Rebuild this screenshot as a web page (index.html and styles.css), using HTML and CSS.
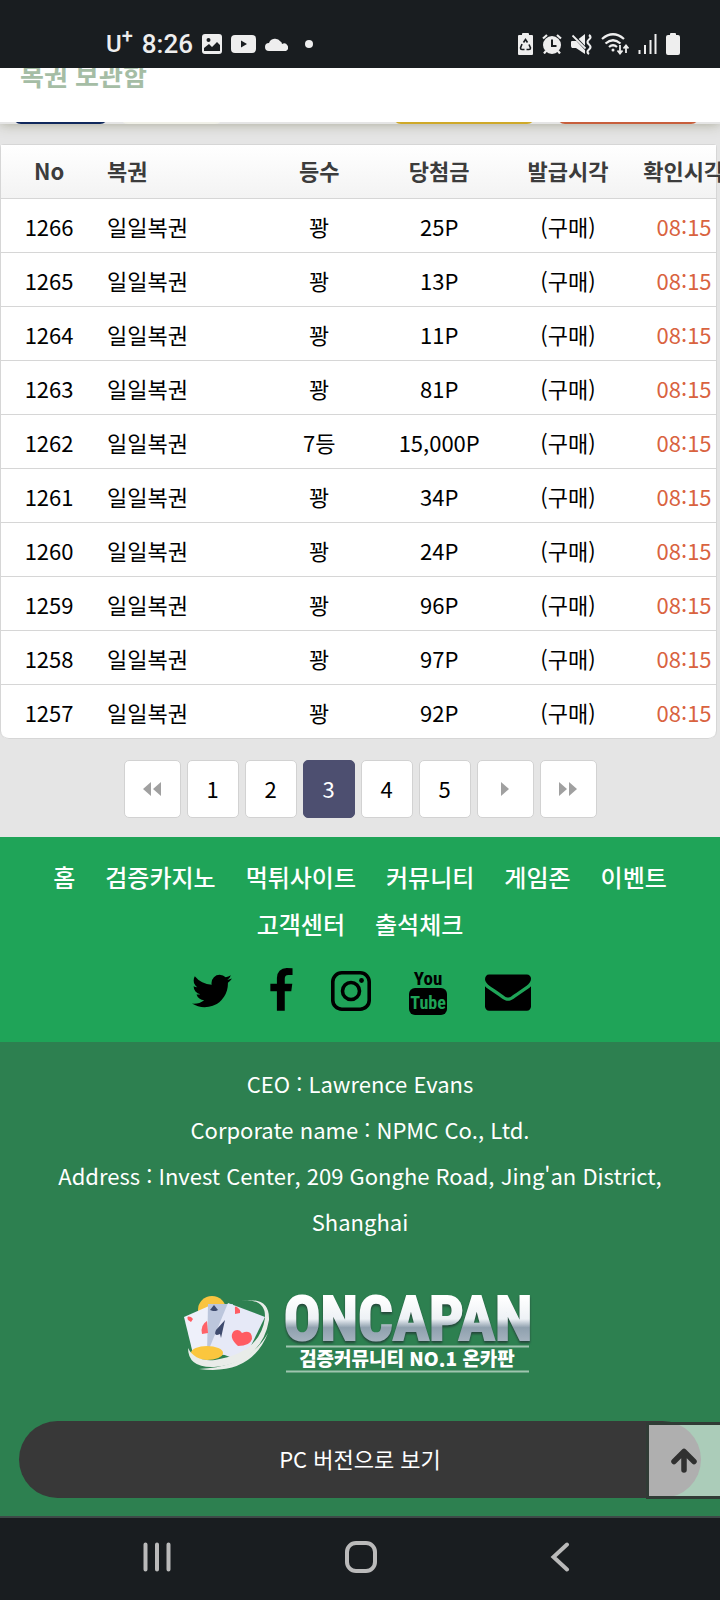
FILE: index.html
```html
<!DOCTYPE html>
<html lang="ko">
<head>
<meta charset="utf-8">
<meta name="viewport" content="width=device-width, initial-scale=1">
<title>복권 보관함</title>
<link rel="stylesheet" href="styles.css">
</head>
<body>
<div class="status">
  <div class="status-side status-left">
    <span class="carrier">U<sup>+</sup></span>
    <span class="clock">8:26</span>
    <svg width="20" height="20" viewBox="0 0 20 20"><rect width="20" height="20" rx="3" fill="#eee"/><circle cx="6.500" cy="6" r="2" fill="#191d20"/><path d="M2 17v-3l5-4 3 3 5-5 3 3v6z" fill="#191d20"/></svg>
    <svg width="25" height="18" viewBox="0 0 25 18"><rect width="25" height="18" rx="4" fill="#eee"/><path d="M10 5.500v7l6-3.500z" fill="#191d20"/></svg>
    <svg width="23" height="13" viewBox="0 0 23 13"><path d="M4 13a4 4 0 0 1 0-8 6.500 6.500 0 0 1 11.500-1.500q1.500.8 1.500 2.500a3.500 3.500 0 0 1 4 7z" fill="#eee"/></svg>
    <i class="dot"></i>
  </div>
  <div class="status-side status-right">
    <svg width="15" height="22" viewBox="0 0 15 22"><path d="M4 2V1q0-1 1-1h5q1 0 1 1v1h3q1 0 1 1v18q0 1-1 1H1q-1 0-1-1V3q0-1 1-1z" fill="#eee"/><path d="M5.500 9.500l2-3 2 3M11 11.500l1.500 3.500q0 1.500-1.500 1.500H8.500M4 11l-1.500 4q0 1.500 1.500 1.500h2.500" fill="none" stroke="#191d20" stroke-width="1.600"/></svg>
    <svg width="20" height="20" viewBox="0 0 20 20"><circle cx="10" cy="11" r="9" fill="#eee"/><path d="M1 4.500L5 1M19 4.500L15 1M4 17l-2 2.500M16 17l2 2.500" stroke="#eee" stroke-width="2.200"/><path d="M10 5.500V12h4.500" fill="none" stroke="#191d20" stroke-width="2"/></svg>
    <svg width="21" height="21" viewBox="0 0 21 21"><path d="M1 7h4l9-7v20l-9-6H1q-1-1-1-2V8q0-1 1-1z" fill="#eee"/><path d="M1 0l14 15" stroke="#191d20" stroke-width="3"/><path d="M1.500 1.500l13 13" stroke="#eee" stroke-width="1.800"/><path d="M18 1q3 2 0 4.500t0 5 0 5 0 4.500" fill="none" stroke="#eee" stroke-width="2.200"/></svg>
    <svg width="28" height="22" viewBox="0 0 28 22"><g fill="none" stroke="#eee" stroke-width="2.200"><path d="M1 6q11-9.500 22 0M4.500 10.500q7.500-6.500 15 0M8 14q4-3.500 8 0"/><path d="M19 12v8M16.500 17.500l2.500 3 2.500-3M25 20v-7M22.500 15.500l2.500-3 2.500 3" stroke-width="1.800"/></g><circle cx="12" cy="17" r="1.500" fill="#eee"/></svg>
    <svg width="19" height="20" viewBox="0 0 19 20"><path d="M1.500 16v4M7 11v9M12.500 6v14M17.500 0v20" stroke="#eee" stroke-width="2"/></svg>
    <svg width="14" height="22" viewBox="0 0 14 22"><path d="M4 2V1q0-1 1-1h4q1 0 1 1v1h2q2 0 2 2v16q0 2-2 2H2q-2 0-2-2V4q0-2 2-2z" fill="#eee"/></svg>
  </div>
</div>
<header class="title-bar"><h1>복권 보관함</h1></header>
<div class="tabs" aria-hidden="true"><span class="tab navy"></span><span class="tab white"></span><span class="tab yellow"></span><span class="tab red"></span></div>
<main>
  <table class="tickets">
    <colgroup><col class="c-no"><col class="c-name"><col class="c-rank"><col class="c-prize"><col class="c-issued"><col class="c-checked"></colgroup>
    <thead><tr><th>No</th><th>복권</th><th>등수</th><th>당첨금</th><th>발급시각</th><th>확인시각</th></tr></thead>
    <tbody>
      <tr><td>1266</td><td>일일복권</td><td>꽝</td><td>25P</td><td>(구매)</td><td>08:15</td></tr>
      <tr><td>1265</td><td>일일복권</td><td>꽝</td><td>13P</td><td>(구매)</td><td>08:15</td></tr>
      <tr><td>1264</td><td>일일복권</td><td>꽝</td><td>11P</td><td>(구매)</td><td>08:15</td></tr>
      <tr><td>1263</td><td>일일복권</td><td>꽝</td><td>81P</td><td>(구매)</td><td>08:15</td></tr>
      <tr><td>1262</td><td>일일복권</td><td>7등</td><td>15,000P</td><td>(구매)</td><td>08:15</td></tr>
      <tr><td>1261</td><td>일일복권</td><td>꽝</td><td>34P</td><td>(구매)</td><td>08:15</td></tr>
      <tr><td>1260</td><td>일일복권</td><td>꽝</td><td>24P</td><td>(구매)</td><td>08:15</td></tr>
      <tr><td>1259</td><td>일일복권</td><td>꽝</td><td>96P</td><td>(구매)</td><td>08:15</td></tr>
      <tr><td>1258</td><td>일일복권</td><td>꽝</td><td>97P</td><td>(구매)</td><td>08:15</td></tr>
      <tr><td>1257</td><td>일일복권</td><td>꽝</td><td>92P</td><td>(구매)</td><td>08:15</td></tr>
    </tbody>
  </table>
  <nav class="pages" aria-label="페이지">
    <a class="arrow" href="#" aria-label="처음"><svg width="18" height="14" viewBox="0 0 18 14"><path d="M8 0v14L0 7zM18 0v14l-8-7z"/></svg></a>
    <a href="#">1</a><a href="#">2</a><a class="current" href="#" aria-current="page">3</a><a href="#">4</a><a href="#">5</a>
    <a class="arrow" href="#" aria-label="다음"><svg width="8" height="14" viewBox="0 0 8 14"><path d="M0 0v14l8-7z"/></svg></a>
    <a class="arrow" href="#" aria-label="마지막"><svg width="18" height="14" viewBox="0 0 18 14"><path d="M0 0v14l8-7zM10 0v14l8-7z"/></svg></a>
  </nav>
</main>
<footer>
  <div class="foot-top">
    <nav class="links"><a href="#">홈</a><a href="#">검증카지노</a><a href="#">먹튀사이트</a><a href="#">커뮤니티</a><a href="#">게임존</a><a href="#">이벤트</a><a href="#">고객센터</a><a href="#">출석체크</a></nav>
    <div class="social">
      <a href="#" aria-label="Twitter"><svg width="40" height="46" viewBox="108 0 1576 1792"><path d="M1684 408q-67 98-162 167 1 14 1 42 0 130-38 259.500t-115.500 248.500-184.500 210.500-258 146-323 54.500q-271 0-496-145 35 4 78 4 225 0 401-138-105-2-188-64.500t-114-159.500q33 5 61 5 43 0 85-11-112-23-185.500-111.500t-73.500-205.500v-4q68 38 146 41-66-44-105-115t-39-154q0-88 44-163 121 149 294.500 238.500t371.500 99.500q-8-38-8-74 0-134 94.500-228.500t228.500-94.500q140 0 236 102 109-21 205-78-37 115-142 178 93-10 186-50z"/></svg></a>
      <a href="#" aria-label="Facebook"><svg width="23" height="46" viewBox="465 0 896 1792"><path d="M1343 12v264h-157q-86 0-116 36t-30 108v189h293l-39 296h-254v759h-306v-759h-255v-296h255v-218q0-186 104-288.500t277-102.500q147 0 228 12z"/></svg></a>
      <a href="#" aria-label="Instagram"><svg width="40" height="46" viewBox="0 0 40 46"><g fill="none" stroke="#000" stroke-width="3.600"><rect x="1.800" y="4.800" width="36.400" height="36.400" rx="9"/><circle cx="20" cy="23" r="8.500"/></g><circle cx="30.500" cy="12.500" r="2.400"/></svg></a>
      <a href="#" aria-label="YouTube"><svg class="yt" width="38" height="48" viewBox="0 0 38 48"><rect y="20" width="38" height="27" rx="6"/><text x="19" y="17" text-anchor="middle">You</text><text class="cut" x="19" y="41" text-anchor="middle">Tube</text></svg></a>
      <a href="#" aria-label="E-mail"><svg width="46" height="46" viewBox="0 0 1792 1792"><path d="M1792 710v794q0 66-47 113t-113 47h-1472q-66 0-113-47t-47-113v-794q44 49 101 87 362 246 497 345 57 42 92.500 65.500t94.500 48 110 24.500h2q51 0 110-24.500t94.500-48 92.500-65.500q170-123 498-345 57-39 100-87zm0-294q0 79-49 151t-122 123q-376 261-468 325-10 7-42.500 31t-54 38.500-52 32.500-57.500 27-50 9h-2q-23 0-50-9t-57.500-27-52-32.500-54-38.500-42.500-31q-91-64-262-182.500t-205-142.500q-62-42-117-115.500t-55-136.500q0-78 41.500-130t118.500-52h1472q65 0 112.500 47t47.500 113z"/></svg></a>
    </div>
  </div>
  <div class="foot-main">
    <address>CEO : Lawrence Evans<br>Corporate name : NPMC Co., Ltd.<br>Address : Invest Center, 209 Gonghe Road, Jing'an District, Shanghai</address>
    <svg class="logo" width="354" height="80" viewBox="0 0 354 80" role="img" aria-label="ONCAPAN">
      <defs><linearGradient id="metal" x1="0" y1="0" x2="0" y2="1"><stop offset=".2" stop-color="#fff"/><stop offset=".5" stop-color="#edf1f5"/><stop offset=".62" stop-color="#8fa0ae"/><stop offset=".85" stop-color="#a9b6c2"/></linearGradient></defs>
      <circle cx="29" cy="17" r="14" fill="#f9c440"/>
      <path d="M1 24l25-11 14 44-28 12z" fill="#eef0fa"/>
      <path d="M25 11h25L42 62H24z" fill="#bcc6dc"/>
      <path d="M45 10l37 14-22 45-34-13z" fill="#e6e9f7"/>
      <path d="M24 28q-7 4-5 13l6-1z" fill="#ff6268"/>
      <path d="M42 27l-9 10q-3 7 4 4l1 4z" fill="#3f4b6e"/>
      <path d="M55 53q-10-9-4-15 5-3 8 2 10-4 10 6-2 7-14 7z" fill="#ff5c62"/>
      <path d="M8 24q-5-2-3 3l3 2 2-3zM57 17q-6-7-5 0v4l5-1z" fill="#ff5c62"/>
      <path d="M31 12l-4 5 3 1h3l2-1z" fill="#3f4b6e"/>
      <ellipse cx="24" cy="60" rx="16" ry="7" fill="#fbc63e"/>
      <path d="M58 8q25-3 24 17-5 35-50 42-20 2-27-12 0 20 26 19 48-5 55-47 1-24-28-19z" fill="#e9ece9"/>
      <path d="M85 40Q66 74 16 76q52 7 69-36z" fill="#e9ece9"/>
      <text class="logo-name" x="225" y="47" text-anchor="middle">ONCAPAN</text>
      <path d="M103 53.500h243M103 78.500h243" stroke="#9fc5af" stroke-width="2"/>
      <text class="logo-sub" x="224" y="73" text-anchor="middle">검증커뮤니티 NO.1 온카판</text>
    </svg>
    <a class="pc" href="#">PC 버전으로 보기</a>
    <button class="to-top" type="button" aria-label="맨 위로"><svg width="26" height="26" viewBox="0 0 26 26"><path d="M13 22V4M3 13.500L13 3.500l10 10" fill="none" stroke="#303030" stroke-width="5.500" stroke-linecap="round" stroke-linejoin="round"/></svg></button>
  </div>
</footer>
<div class="sysnav">
  <button type="button" aria-label="최근 앱"><svg width="30" height="30" viewBox="0 0 30 30"><path d="M3.500 2.500v25M15 2.500v25M26.500 2.500v25"/></svg></button>
  <button type="button" aria-label="홈 화면"><svg width="32" height="32" viewBox="0 0 32 32"><rect x="2" y="2" width="28" height="28" rx="9"/></svg></button>
  <button type="button" aria-label="뒤로"><svg width="30" height="30" viewBox="0 0 30 30"><path d="M17 2.500L3.500 15 17 27.500"/></svg></button>
</div>
</body>
</html>
```
FILE: styles.css
```css
* { box-sizing: border-box; }
body {
  display: flex;
  flex-direction: column;
  min-height: 100vh;
  margin: 0;
  overflow-x: hidden;
  background: #e5e5e5;
  color: #000;
  font-family: "Noto Sans CJK KR", sans-serif;
  font-size: 22px;
}
a { color: inherit; text-decoration: none; }
svg { display: block; }
button { padding: 0; background: none; border: 0; }

.status {
  position: relative;
  z-index: 3;
  display: flex;
  justify-content: space-between;
  height: 68px;
  padding: 20px 40px 0 106px;
  background: #191d20;
  color: #eee;
  font-family: Roboto, sans-serif;
}
.status-side { display: flex; align-items: center; }
.status-left { gap: 9px; }
.status-right { gap: 9px; }
.carrier { font-size: 24px; font-weight: 500; line-height: 28px; }
.carrier sup { font-size: 20px; line-height: 0; }
.clock { font-size: 26px; font-weight: 500; line-height: 28px; }
.dot { width: 8px; height: 8px; margin-left: 8px; border-radius: 50%; background: #eee; }

.title-bar {
  position: relative;
  z-index: 2;
  height: 54px;
  padding-left: 20px;
  overflow: hidden;
  background: #fff;
}
.title-bar h1 {
  margin: 0;
  color: #a5bda5;
  font-size: 26px;
  font-weight: 700;
  line-height: 14px;
}
.tabs {
  display: flex;
  height: 40px;
  margin-top: -38px;
  padding: 0 21px 0 13px;
  box-shadow: 0 0 12px rgba(90, 90, 50, .45);
}
.tab { border-radius: 8px; }
.tab.navy { width: 95px; background: #10285c; }
.tab.white { width: 103px; margin: 0 auto 0 12px; background: #f0f0e8; }
.tab.yellow { width: 142px; background: #cfa928; }
.tab.red { width: 142px; margin-left: 22px; background: #c85f3c; }

main { position: relative; padding: 20px 3px 19px 0; }
.tickets {
  width: 100%;
  table-layout: fixed;
  border-collapse: separate;
  border-spacing: 0;
  background: #fff;
  border: 1px solid #d6d6d6;
  border-bottom: 0;
  border-radius: 4px 4px 8px 8px;
}
.c-no { width: 14%; }
.c-name { width: 23%; }
.c-rank { width: 15%; }
.c-prize { width: 19%; }
.c-issued { width: 17%; }
.c-checked { width: 12%; }
th, td {
  height: 54px;
  padding: 0;
  border-bottom: 1px solid #d6d6d6;
  line-height: 32px;
  text-align: center;
  white-space: nowrap;
}
th {
  padding-bottom: 4px;
  background: linear-gradient(#fff, #f3f3f3);
  color: #3c3c3c;
  font-weight: 700;
}
th:first-child, td:first-child { padding-right: 4px; }
th:nth-child(2), td:nth-child(2) { padding-left: 6px; text-align: left; }
th:nth-child(4), td:nth-child(4), th:nth-child(5), td:nth-child(5) { padding-right: 3px; }
th:last-child { padding-left: 13px; }
td:last-child { padding-left: 22px; color: #d9633f; }
tr:last-child td:first-child { border-bottom-left-radius: 8px; }
tr:last-child td:last-child { border-bottom-right-radius: 8px; }

.pages { display: flex; justify-content: center; gap: 6px; margin: 21px -3px 0 0; }
.pages a {
  display: flex;
  align-items: center;
  justify-content: center;
  width: 52px;
  height: 58px;
  padding-bottom: 3px;
  background: #fff;
  border: 1px solid #d2d2d2;
  border-radius: 5px;
}
.pages .arrow { width: 57px; padding-bottom: 0; }
.pages svg { fill: #a0a0a0; }
.pages .current { background: #4d4f70; border-color: #4d4f70; color: #fff; }

.foot-top { padding: 16px 30px 26px; background: #1fa458; }
.links {
  display: flex;
  flex-wrap: wrap;
  justify-content: center;
  color: #fff;
  font-size: 24px;
  font-weight: 500;
  line-height: 47px;
}
.links a { margin: 0 15px; }
.social { display: flex; justify-content: center; align-items: flex-start; gap: 38px; padding: 21px 0 0 3px; }
.yt text { font: 700 19px "Liberation Sans Narrow", "Roboto Condensed", "DejaVu Sans Condensed", sans-serif; }
.yt .cut { font-size: 18px; fill: #1fa458; }

.foot-main {
  position: relative;
  display: flex;
  flex: 1;
  flex-direction: column;
  align-items: center;
  padding: 18px 19px 18px;
  background: #2d8050;
  color: #fff;
  text-align: center;
}
address { width: 100%; padding: 0 20px; font-style: normal; line-height: 46px; }
.logo { margin: 49px 0 48px; }
.logo-name {
  font: 700 61px "Liberation Sans Narrow", "Roboto Condensed", Roboto, sans-serif;
  fill: url(#metal);
  stroke: url(#metal);
  stroke-width: 2;
  filter: drop-shadow(0 2px 1px #24463a);
}
.logo-sub { font: 900 19px "Noto Sans CJK KR", sans-serif; fill: #fff; }
.pc { width: 100%; padding-bottom: 3px; border-radius: 39px; background: #383838; line-height: 74px; }
.to-top {
  position: absolute;
  right: 0;
  bottom: 17px;
  width: 74px;
  height: 77px;
  padding-left: 22px;
  background: rgba(255, 255, 255, .6);
  border: 3px solid #303b35;
  border-right: 0;
}

.sysnav {
  display: flex;
  justify-content: space-between;
  align-items: center;
  height: 84px;
  padding: 0 140px 4px 142px;
  background: #191d20;
  border-top: 2px solid #3e4a48;
}
.sysnav svg { fill: none; stroke: #bababa; stroke-width: 4; stroke-linecap: round; }
```
